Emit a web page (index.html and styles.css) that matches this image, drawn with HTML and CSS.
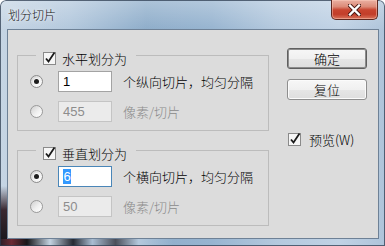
FILE: index.html
```html
<!DOCTYPE html>
<html lang="zh-CN">
<head>
<meta charset="utf-8">
<title>划分切片</title>
<link rel="stylesheet" href="styles.css">
</head>
<body>
<div class="window">
  <div class="titlebar">
    <span class="title">划分切片</span>
    <span class="close">
      <svg width="13" height="12" viewBox="0 0 13 12">
        <path d="M2 1.5 L11 10.5 M11 1.5 L2 10.5" stroke="#4a1a14" stroke-width="4.2" stroke-linecap="square"/>
        <path d="M2 1.5 L11 10.5 M11 1.5 L2 10.5" stroke="#ffffff" stroke-width="2.4" stroke-linecap="square"/>
      </svg>
    </span>
  </div>
  <div class="client">
    <div class="left">
      <fieldset class="group">
        <legend class="legend">
          <span class="cb"><svg width="14" height="14" viewBox="0 0 14 14"><rect x="0.5" y="1.5" width="12" height="12" fill="#f6f6f6" stroke="#8a8a8a"/><path d="M3 7.5 L5.5 10.5 L11.5 1.5" fill="none" stroke="#1b1b1b" stroke-width="1.8"/></svg></span>
          <span class="legend-text">水平划分为</span>
        </legend>
        <div class="rows">
          <div class="row">
            <span class="radio"><span class="dot"></span></span>
            <span class="field">1</span>
            <span class="label">个纵向切片，均匀分隔</span>
          </div>
          <div class="row off">
            <span class="radio"></span>
            <span class="field">455</span>
            <span class="label">像素/切片</span>
          </div>
        </div>
      </fieldset>
      <fieldset class="group second">
        <legend class="legend">
          <span class="cb"><svg width="14" height="14" viewBox="0 0 14 14"><rect x="0.5" y="1.5" width="12" height="12" fill="#f6f6f6" stroke="#8a8a8a"/><path d="M3 7.5 L5.5 10.5 L11.5 1.5" fill="none" stroke="#1b1b1b" stroke-width="1.8"/></svg></span>
          <span class="legend-text">垂直划分为</span>
        </legend>
        <div class="rows">
          <div class="row">
            <span class="radio"><span class="dot"></span></span>
            <span class="field focus"><span class="sel">6</span></span>
            <span class="label">个横向切片，均匀分隔</span>
          </div>
          <div class="row off">
            <span class="radio"></span>
            <span class="field">50</span>
            <span class="label">像素/切片</span>
          </div>
        </div>
      </fieldset>
    </div>
    <div class="right">
      <span class="btn default">确定</span>
      <span class="btn">复位</span>
      <div class="preview">
        <span class="cb"><svg width="14" height="14" viewBox="0 0 14 14"><rect x="0.5" y="1.5" width="12" height="12" fill="#f6f6f6" stroke="#8a8a8a"/><path d="M3 7.5 L5.5 10.5 L11.5 1.5" fill="none" stroke="#1b1b1b" stroke-width="1.8"/></svg></span>
        <span class="preview-text">预览(W)</span>
      </div>
    </div>
  </div>
</div>
</body>
</html>
```

FILE: styles.css
```css
html, body {
  margin: 0;
  padding: 0;
  background: #ffffff;
}

.window {
  width: 385px;
  height: 246px;
  box-sizing: border-box;
  padding: 0 6px 7px 7px;
  display: flex;
  flex-direction: column;
  border-radius: 6px 6px 0 0;
  overflow: hidden;
  font-family: "Liberation Sans", "Noto Sans CJK SC", sans-serif;
  font-size: 13px;
  font-weight: 300;
  color: #000;
  box-shadow: inset 0 0 0 1px rgba(45, 60, 80, 0.75);
  background:
    linear-gradient(90deg, #2a1f27 0%, #6b2a34 3%, #171619 7%, #c4d3e1 13%, #262a33 19%, #a9bdd2 24%, #4b4f5a 30%, #b4c8dc 36%, rgba(180, 200, 220, 0) 45%) left bottom / 100% 7px no-repeat,
    linear-gradient(180deg, rgba(30, 25, 30, 0) 0%, #3a2830 40%, #151419 100%) left bottom / 7px 60px no-repeat,
    linear-gradient(180deg, rgba(255, 255, 255, 0.28) 0, rgba(255, 255, 255, 0) 30px),
    linear-gradient(90deg, #c6d5e4 0%, #b3c8dd 18%, #8eadca 38%, #97b4d0 55%, #b4c9de 72%, #c0d2e5 88%, #aec4da 100%);
}

.titlebar {
  height: 29px;
  flex: none;
  display: flex;
  align-items: flex-start;
}

.title {
  margin: 8px 0 0 1px;
  font-family: "Noto Sans CJK SC", sans-serif;
  font-size: 12px;
  line-height: 14px;
  color: #101010;
  text-shadow: 0 0 6px rgba(255, 255, 255, 0.9), 0 0 2px rgba(255, 255, 255, 0.8);
}

.close {
  margin-left: auto;
  margin-right: 1px;
  width: 47px;
  height: 20px;
  box-sizing: border-box;
  border: 1px solid #5e2820;
  border-top: none;
  border-radius: 0 0 5px 5px;
  background: linear-gradient(180deg, #eab0a2 0%, #dc8b78 35%, #c8442f 52%, #c23e2a 75%, #d9735c 100%);
  box-shadow: inset 0 0 0 1px rgba(255, 210, 195, 0.45);
  display: flex;
  align-items: center;
  justify-content: center;
}

.client {
  flex: 1;
  display: flex;
  border: 1px solid #6e8196;
  background: #dcdcdc;
}

.left {
  flex: none;
  width: 252px;
  padding: 22px 0 0 9px;
}

.group {
  margin: 0;
  padding: 12px 0 8px 0;
  border: 1px solid #bcbcbc;
  min-width: 0;
}

.group.second {
  margin-top: 16px;
}

.legend {
  margin-left: 18px;
  padding: 0 9px 0 7px;
  height: 7px;
  display: flex;
  align-items: flex-start;
}

.legend-text {
  margin-left: 5px;
  font-family: "Noto Sans CJK SC", sans-serif;
  font-size: 13px;
  line-height: 13px;
}

.cb {
  display: block;
  width: 14px;
  height: 14px;
  flex: none;
  margin-top: -1px;
}

.cb svg {
  display: block;
}

.rows {
  padding-left: 12px;
}

.row {
  display: flex;
  align-items: center;
  height: 21px;
}

.row + .row {
  margin-top: 9px;
}

.radio {
  width: 13px;
  height: 13px;
  flex: none;
  box-sizing: border-box;
  border-radius: 50%;
  border: 1px solid #8b8b8b;
  background: linear-gradient(135deg, #cfcfcf 0%, #f0f0f0 55%, #ffffff 100%);
  display: flex;
  align-items: center;
  justify-content: center;
}

.row.off .radio {
  border-color: #9a9a9a;
}

.dot {
  width: 5px;
  height: 5px;
  border-radius: 50%;
  background: #1e1e1e;
  box-shadow: 0 0 0 1px rgba(255, 255, 255, 0.55);
}

.field {
  width: 54px;
  height: 21px;
  flex: none;
  box-sizing: border-box;
  margin-left: 15px;
  border: 1px solid #a3a3a3;
  background: #ffffff;
  padding-left: 4px;
  font-size: 13px;
  line-height: 19px;
  display: flex;
  align-items: center;
}

.field.focus {
  border-color: #4a86b8;
}

.sel {
  background: #3399ff;
  color: #ffffff;
  line-height: 15px;
  padding: 0 0.5px;
}

.row.off .field {
  background: #ebebeb;
  border-color: #c4c4c4;
  color: #8d8d8d;
}

.label {
  margin-left: 11px;
  font-family: "Noto Sans CJK SC", sans-serif;
  font-size: 13px;
  line-height: 15px;
}

.row.off .label {
  color: #8a8a8a;
}

.right {
  flex: none;
  width: 80px;
  margin-left: 18px;
  padding-top: 18px;
  display: flex;
  flex-direction: column;
}

.btn {
  height: 21px;
  box-sizing: border-box;
  border: 1px solid #8e8e8e;
  border-radius: 3px;
  background: linear-gradient(180deg, #f7f7f7 0%, #f0f0f0 50%, #e6e6e6 51%, #dedede 100%);
  box-shadow: inset 0 0 0 1px #fbfbfb;
  display: flex;
  align-items: center;
  justify-content: center;
  font-family: "Noto Sans CJK SC", sans-serif;
  font-size: 13px;
  line-height: 15px;
}

.btn + .btn {
  margin-top: 10px;
}

.btn.default {
  border-color: #5f5f5f;
  box-shadow: inset 0 0 0 1px #8c8c8c;
}

.preview {
  margin-top: 32px;
  margin-left: 1px;
  display: flex;
  align-items: center;
  gap: 7px;
}

.preview-text {
  font-family: "Noto Sans CJK SC", sans-serif;
  font-size: 13px;
  line-height: 15px;
}
```
